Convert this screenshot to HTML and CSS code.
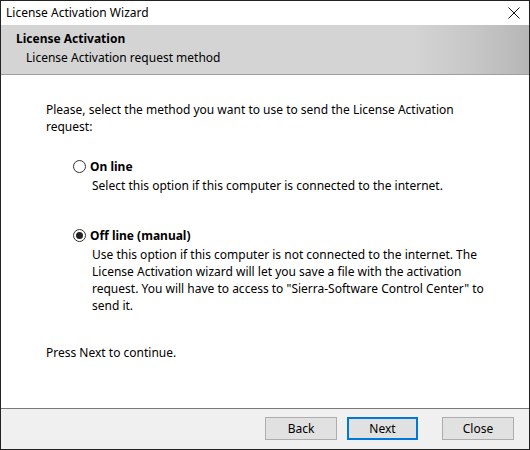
FILE: index.html
```html
<!DOCTYPE html>
<html>
<head>
<meta charset="utf-8">
<link rel="stylesheet" href="styles.css">
</head>
<body>
<div class="window">
  <div class="titlebar">
    <span class="title">License Activation Wizard</span>
    <svg class="close" width="12" height="12" viewBox="0 0 12 12"><path d="M0.5 0.5 L11.5 11.5 M11.5 0.5 L0.5 11.5" stroke="#111" stroke-width="1" fill="none"/></svg>
  </div>
  <div class="header">
    <div class="h-title">License Activation</div>
    <div class="h-sub">License Activation request method</div>
  </div>
  <div class="content">
    <p class="intro">Please, select the method you want to use to send the License Activation<br>request:</p>
    <div class="option first">
      <span class="radio"></span><span class="label">On line</span>
    </div>
    <p class="desc">Select this option if this computer is connected to the internet.</p>
    <div class="option second">
      <span class="radio checked"></span><span class="label">Off line (manual)</span>
    </div>
    <p class="desc">Use this option if this computer is not connected to the internet. The<br>License Activation wizard will let you save a file with the activation<br>request. You will have to access to "Sierra-Software Control Center" to<br>send it.</p>
    <p class="press">Press Next to continue.</p>
  </div>
  <div class="footer">
    <button class="btn">Back</button>
    <button class="btn default">Next</button>
    <button class="btn close-btn">Close</button>
  </div>
</div>
</body>
</html>
```
FILE: styles.css
```css
* { box-sizing: border-box; }
html, body { margin: 0; padding: 0; }
body {
  width: 530px;
  height: 450px;
  font-family: "Noto Sans", "Open Sans", sans-serif;
  font-size: 12px;
  color: #000;
  background: #fff;
}
.window {
  width: 530px;
  height: 450px;
  border: 1px solid #222;
  display: flex;
  flex-direction: column;
  background: #fff;
}
.titlebar {
  height: 24px;
  display: flex;
  align-items: center;
  justify-content: space-between;
  padding: 0 9px 0 5px;
  background: #fff;
}
.title { line-height: 24px; }
.close { display: block; }
.header {
  height: 50px;
  padding: 5px 0 0 15px;
  background: linear-gradient(to right, #d4d4d4 0%, #d4d4d4 78%, #c6c6c6 90%, #b6b6b6 100%);
  border-bottom: 1px solid #a0a0a0;
  line-height: 17px;
}
.h-title { font-weight: bold; }
.h-sub { padding-left: 10px; margin-top: 2px; }
.content {
  flex: 1;
  padding: 25px 0 0 45px;
  border-top: 1px solid #fff;
  line-height: 17px;
}
.content p { margin: 0; }
.option {
  display: flex;
  align-items: center;
  margin-left: 27px;
  height: 17px;
}
.option.first { margin-top: 23px; }
.option.second { margin-top: 33px; }
.radio {
  width: 13px;
  height: 13px;
  border: 1px solid #333;
  border-radius: 50%;
  background: #fff;
  display: flex;
  align-items: center;
  justify-content: center;
  margin-right: 4px;
}
.radio.checked::after {
  content: "";
  width: 7px;
  height: 7px;
  border-radius: 50%;
  background: #222;
}
.label { font-weight: bold; }
.desc { margin-left: 46px !important; margin-top: 2px !important; }
.press { margin-top: 30px !important; }
.footer {
  height: 41px;
  border-top: 1px solid #7a7a7a;
  background: #f0f0f0;
  display: flex;
  justify-content: flex-end;
  align-items: flex-start;
  padding: 8px 15px 0 0;
}
.btn {
  width: 72px;
  height: 23px;
  border: 1px solid #adadad;
  background: #e1e1e1;
  font-family: inherit;
  font-size: 12px;
  color: #000;
  padding: 0;
  margin-left: 10px;
}
.btn.default {
  border: 2px solid #0078d7;
  width: 71px;
}
.btn.close-btn { margin-left: 24px; }
```
